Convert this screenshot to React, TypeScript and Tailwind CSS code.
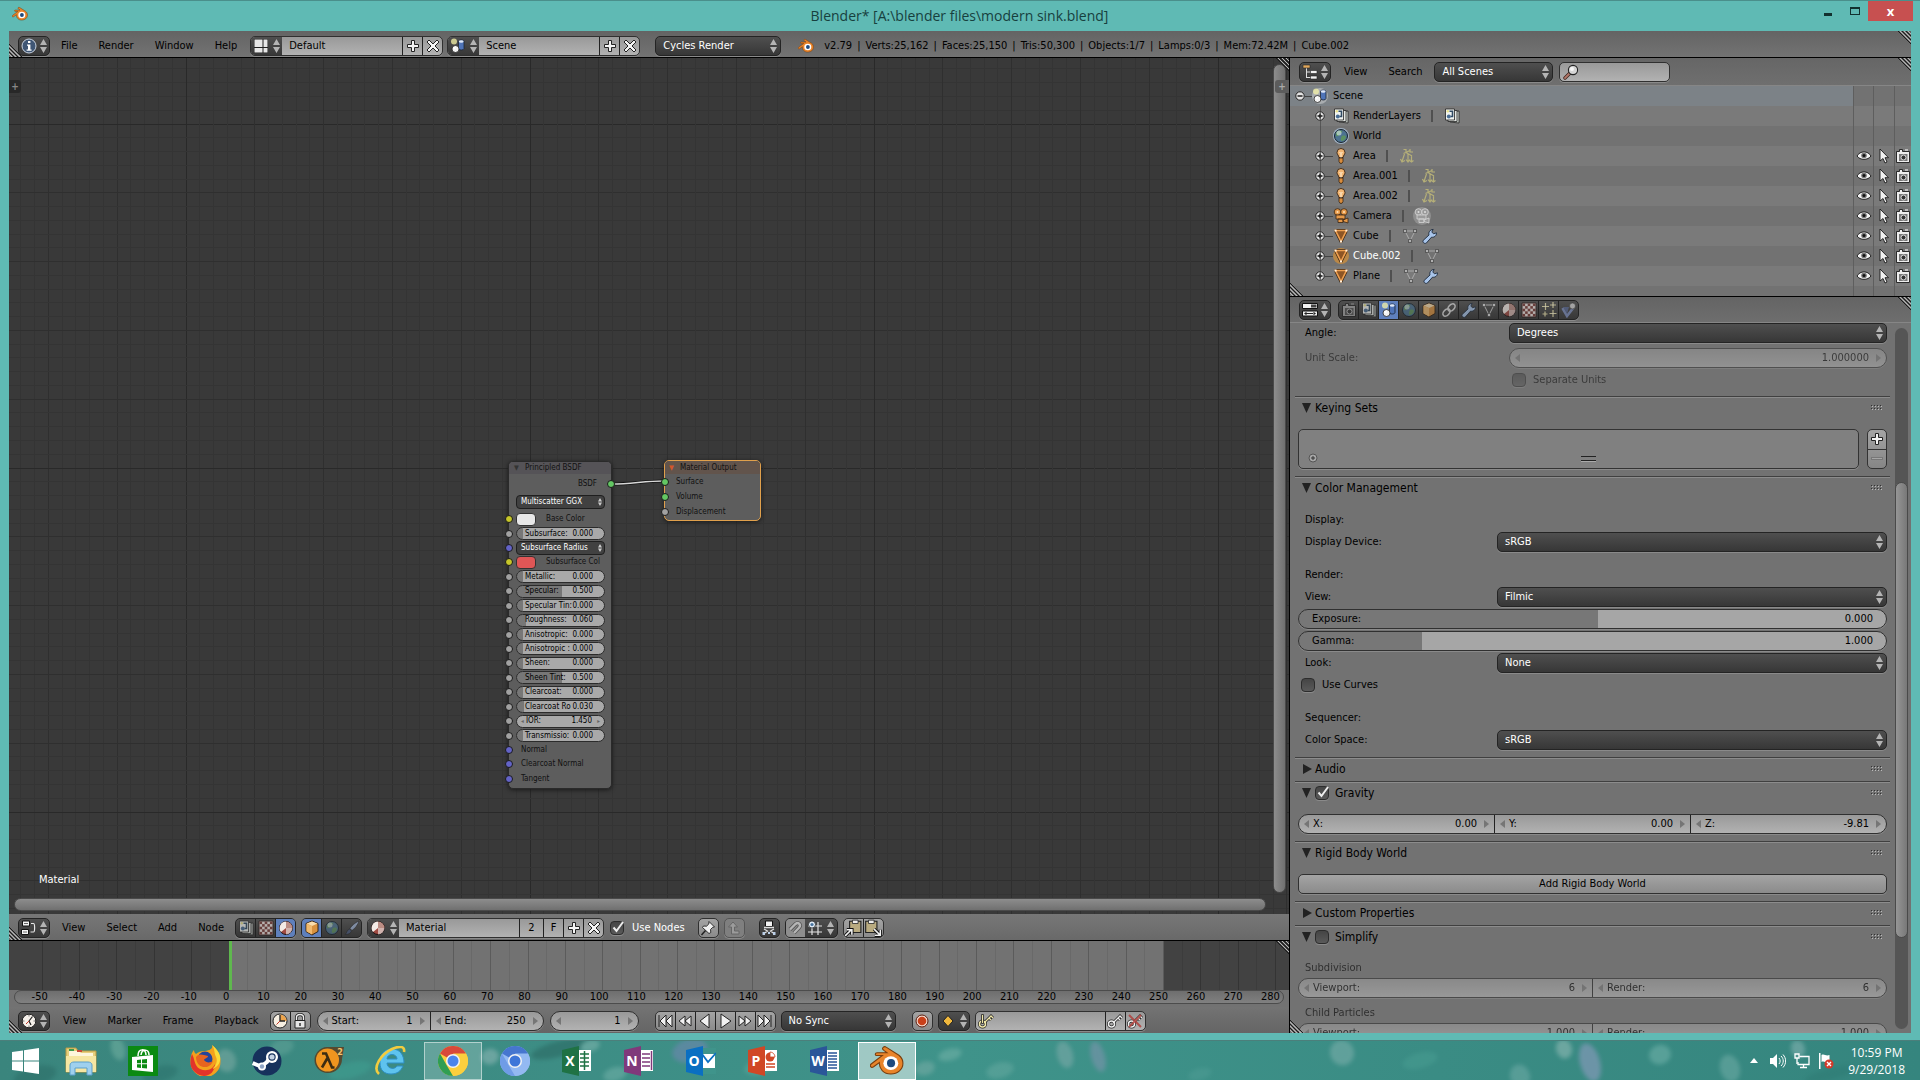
import type { ReactNode } from "react";

/* ---------- icons, all on a 16x16 grid ---------- */

const Svg = ({ children, size = 16 }: { children: ReactNode; size?: number }) => (
  <svg width={size} height={size} viewBox="0 0 16 16" className="shrink-0" aria-hidden="true">
    {children}
  </svg>
);

const PlusIcon = () => (
  <Svg>
    <path d="M6.5 2.5h3v4h4v3h-4v4h-3v-4h-4v-3h4z" fill="#f4f4f4" stroke="#222" />
  </Svg>
);

const CrossIcon = () => (
  <Svg>
    <path d="M4 2 8 6l4-4 2 2-4 4 4 4-2 2-4-4-4 4-2-2 4-4-4-4z" fill="#f4f4f4" stroke="#222" />
  </Svg>
);

const InfoIcon = () => (
  <Svg>
    <circle cx="8" cy="8" r="7" fill="#3f5675" stroke="#c9d3e0" />
    <path d="M7 3h2.4v2H7zM6 6.4h3.4v5h1.2v1.4H5.6v-1.4H7V7.8H6z" fill="#fff" />
  </Svg>
);

const LayoutIcon = () => (
  <Svg>
    <path d="M1 1h14v14H1z" fill="#222" />
    <path d="M1.5 1.5h8v7.500h-8zM10.500 1.500h4v7.500h-4zM10.500 10h4v4.500h-4zM1.500 10h8v4.500h-8z" fill="#e8e8e8" />
  </Svg>
);

const SceneIcon = () => (
  <Svg>
    <circle cx="4" cy="3.500" r="3" fill="#f6f3a8" opacity=".75" />
    <path d="M8.500 3.500c0-2 5.500-2 5.500 0v7c0 2-5.500 2-5.500 0z" fill="#4f74b8" stroke="#1b2333" strokeWidth=".8" />
    <ellipse cx="11.200" cy="3.500" rx="2.400" ry="1.200" fill="#dfe8f7" />
    <circle cx="5.500" cy="11" r="3.500" fill="#f2f2f2" stroke="#222" strokeWidth=".8" />
    <circle cx="4.500" cy="10" r="1.200" fill="#fff" />
  </Svg>
);

const LayersIcon = () => (
  <Svg>
    <path d="m6 4 9-1v12l-9-1z" fill="#cfd6cf" stroke="#222" strokeWidth=".8" />
    <path d="M4 2.500h9v11H4z" fill="#e4e8e4" stroke="#222" strokeWidth=".8" />
    <path d="M1.500 1h9v11h-9z" fill="#f1f4f1" stroke="#222" strokeWidth=".8" />
    <path d="M5.500 3.200h3v5.300h-2" fill="none" stroke="#2f4a63" strokeWidth="1.600" />
    <circle cx="4.800" cy="8.500" r="2" fill="#4a6d94" />
    <circle cx="3.800" cy="3.200" r="1.200" fill="#e9e28a" />
  </Svg>
);

const WorldIcon = () => (
  <Svg>
    <circle cx="8" cy="8" r="6.500" fill="#4d7391" stroke="#16232e" />
    <path d="M3 5c2-3 5-3 6-2s-1 2-2 3-2 3-4 2zM9 8c2-1 4 0 4 1s-2 4-4 4-1-4 0-5z" fill="#5c9160" />
    <circle cx="6" cy="5" r="2.500" fill="#dcebf2" opacity=".6" />
  </Svg>
);

const LampIcon = () => (
  <Svg>
    <path d="M8 .5a4 4 0 0 1 4 4c0 2-1.800 2.800-1.800 5H5.800C5.800 7.300 4 6.500 4 4.500a4 4 0 0 1 4-4z" fill="#f3b673" stroke="#3a2412" strokeWidth=".9" />
    <path d="M6 10h4v3.500l-1 1.800H7l-1-1.800z" fill="#d98d3d" stroke="#3a2412" strokeWidth=".8" />
    <path d="M6.500 4 8 5.500 9.500 4M8 5.500v4" stroke="#fff3dc" fill="none" />
  </Svg>
);

const LampDataIcon = () => (
  <Svg>
    <g fill="none" stroke="#b5af78" strokeWidth="1.200">
      <path d="M4.500 1.500H7v3M4.500 5.500 11 2.500M7 4.500 13 8M5.500 6 3 13.500M9 6v7M12.500 7.500v6.500M1.500 11l1.500 3 3-1.500M7 11.500 9 14l2-2.500M10.500 12.500l2 1.500 2-1.500M11 1v3h3" />
    </g>
  </Svg>
);

const CameraIcon = ({ grey = false }: { grey?: boolean }) => (
  <Svg>
    <g fill={grey ? "#9a9a9a" : "#e79a4a"} stroke={grey ? "#d5d5d5" : "#3a2412"} strokeWidth=".8">
      <circle cx="4.500" cy="4" r="3.300" />
      <circle cx="11" cy="4" r="3.300" />
      <path d="M3 7h9v4H3zM5 11h5v3.500H5zM10 12l5-2v5l-5-1.500z" />
    </g>
    <circle cx="4.500" cy="4" r="1" fill={grey ? "#ddd" : "#ffe0b8"} />
    <circle cx="11" cy="4" r="1" fill={grey ? "#ddd" : "#ffe0b8"} />
  </Svg>
);

const MeshIcon = () => (
  <Svg>
    <path d="M2.500 2.500h11L8 13.500z" fill="#8a4f1c" stroke="#3a2412" strokeWidth="3" strokeLinejoin="round" />
    <path d="M2.500 2.500h11L8 13.500z" fill="#8d5525" stroke="#f0a050" strokeWidth="1.600" />
    <path d="M1.500 1.500h2v2h-2zM12.500 1.500h2v2h-2zM7 12.500h2v2H7z" fill="#fff1de" />
  </Svg>
);

const MeshDataIcon = ({ tone = "#b0b0b0" }: { tone?: string }) => (
  <Svg>
    <path d="M3 3h10L8 13z" fill="none" stroke={tone} strokeWidth=".9" />
    <g fill={tone} stroke="#333" strokeWidth=".6">
      <path d="M1.500 1.500h3v3h-3zM11.500 1.500h3v3h-3zM6.500 11.500h3v3h-3z" />
    </g>
  </Svg>
);

const WrenchIcon = () => (
  <Svg>
    <path
      d="M1.200 12.400 7 7c-.8-2.500.8-5.400 4.200-5.600L9.800 4l1.700 1.800 3-1c.2 3-2.500 5-4.900 4.300l-5.300 6c-2 1-4.100-.9-3.100-2.700z"
      fill="#a9c5ea"
      stroke="#1d2b40"
      strokeWidth=".9"
    />
  </Svg>
);

const EyeIcon = () => (
  <Svg>
    <path d="M1 8c3-5.500 11-5.500 14 0-3 4.500-11 4.500-14 0z" fill="#f2f2f2" stroke="#222" />
    <circle cx="8" cy="7.500" r="2.800" fill="#777" />
    <circle cx="8" cy="7.500" r="1.500" fill="#111" />
  </Svg>
);

const PointerIcon = () => (
  <Svg>
    <path d="M4 1v12l3-2.500 2 4.500 2-1-2-4.300h3.500z" fill="#f2f2f2" stroke="#1a1a1a" strokeWidth=".9" />
  </Svg>
);

const PhotoIcon = ({ dim = false }: { dim?: boolean }) => (
  <Svg>
    <path d="M1.500 3.500h3v-2h3v2h7v11h-13z" fill={dim ? "#a5a5a5" : "#ededed"} stroke="#1a1a1a" strokeWidth=".9" />
    <path d="M4 6h8.500v7H4z" fill={dim ? "#555" : "#777"} />
    <circle cx="8.500" cy="9.500" r="2.500" fill="#333" stroke={dim ? "#bbb" : "#ddd"} />
    <path d="M10 2h3" stroke={dim ? "#aaa" : "#fff"} />
  </Svg>
);

const OutlinerIcon = () => (
  <Svg>
    <path d="M4.500 4v10M4.500 8H9M4.500 13.500H9" stroke="#ddd" fill="none" />
    <path d="M1 1h7v3H1z" fill="#e2a85c" stroke="#222" strokeWidth=".6" />
    <path d="M8.500 6.500H15v3H8.500zM8.500 12H15v3H8.500z" fill="#f0f0f0" stroke="#222" strokeWidth=".6" />
  </Svg>
);

const PropertiesIcon = () => (
  <Svg>
    <path d="M.5 1.500h15v5H.5z" fill="#f0f0f0" stroke="#111" />
    <path d="M9 2.500h5.500v3H9z" fill="#444" />
    <path d="M.5 9h15v5H.5z" fill="#f0f0f0" stroke="#111" />
    <path d="m2 11.500 2.500-1.800v3.600zM14 11.500l-2.500-1.800v3.600zM4 11h8v1H4z" fill="#222" />
  </Svg>
);

const NodeEditorIcon = () => (
  <Svg>
    <path d="M1.500 1h7v5h-7zM.5 9.500h7v5h-7z" fill="#f3f3f3" stroke="#111" />
    <path d="M3 3.500h4M2 12h4" stroke="#666" />
    <path d="M10 3.500h2.500c1.500 0 1.500 8.500 0 8.500H9.500" stroke="#e8e8e8" strokeWidth="1.200" fill="none" />
  </Svg>
);

const ClockIcon = () => (
  <Svg>
    <circle cx="8" cy="8" r="6.800" fill="#f5f0ea" stroke="#222" />
    <path d="M8 8 11.500 3.500M8 8l2 4" stroke="#222" strokeWidth="1.200" />
    <path d="M8 8 5 11" stroke="#c0392b" />
    <path d="M8 2v1.500M8 12.500V14M2 8h1.500M12.500 8H14" stroke="#777" />
  </Svg>
);

const ClockRangeIcon = () => (
  <Svg>
    <circle cx="8" cy="8" r="7" fill="#f7efe2" stroke="#222" />
    <path d="M8 8V1.500A6.500 6.500 0 0 1 14.500 8z" fill="#eda44c" />
    <path d="M8 2v6h5" stroke="#222" strokeWidth="1.300" fill="none" />
    <path d="M8 8 4.500 11.500" stroke="#c0392b" />
  </Svg>
);

const LockIcon = () => (
  <Svg>
    <path d="M4.500 8V4.500c0-4 7-4 7 0V8" fill="none" stroke="#222" strokeWidth="3" />
    <path d="M4.500 8V4.500c0-4 7-4 7 0V8" fill="none" stroke="#eee" strokeWidth="1.400" />
    <path d="M3 7.500h10v7.500H3z" fill="#e6e6e6" stroke="#222" />
    <path d="M8 10v3" stroke="#333" strokeWidth="1.500" />
  </Svg>
);

const CubeIcon = () => (
  <Svg>
    <path d="m8 1 6 2.500v8L8 15l-6-3.500v-8z" fill="#d7913f" stroke="#2b1a0a" strokeWidth=".9" />
    <path d="m8 1.500 5.500 2L8 6 2.500 3.500z" fill="#f7dcae" />
    <path d="M8 6v8.500l-5.500-3V3.800z" fill="#efb96f" />
  </Svg>
);

const LinkIcon = () => (
  <Svg>
    <g fill="none" stroke="#dcdcdc" strokeWidth="1.600">
      <ellipse cx="10.500" cy="5.500" rx="4.200" ry="2.800" transform="rotate(-45 10.500 5.500)" />
      <ellipse cx="5.500" cy="10.500" rx="4.200" ry="2.800" transform="rotate(-45 5.500 10.500)" />
    </g>
  </Svg>
);

const MaterialIcon = () => (
  <Svg>
    <circle cx="8" cy="8" r="6.500" fill="#a04a42" stroke="#1d1111" />
    <path d="M8 1.500A6.500 6.500 0 0 0 3 12l5-4z" fill="#f3ebe6" />
    <path d="M8 1.500A6.500 6.500 0 0 1 14.500 8L8 8z" fill="#bb8d84" />
    <path d="M8 8h6.500A6.500 6.500 0 0 1 8 14.500z" fill="#e6dedb" opacity=".7" />
  </Svg>
);

const checkerCells = [0, 1, 2, 3, 4].flatMap((r) =>
  [0, 1, 2, 3, 4].filter((c) => (r + c) % 2 === 0).map((c) => [c, r]),
);

const TextureIcon = () => (
  <Svg>
    <path d="M1 1h14v14H1z" fill="#f3e8e5" stroke="#2a1a18" />
    {checkerCells.map(([c, r]) => (
      <rect key={`${c}${r}`} x={1.5 + c * 2.6} y={1.5 + r * 2.6} width="2.600" height="2.600" fill="#7c3d38" />
    ))}
  </Svg>
);

const ParticlesIcon = () => (
  <Svg>
    <path
      d="M4.500 1v7M1 4.500h7M12 0v6M9 3h6M4 9.500v5M1.500 12h5M12 8v7M8.500 11.500h7"
      stroke="#f0e6b0"
      strokeWidth="1.200"
    />
    <path d="M4 4h1v1H4zM11.500 2.500h1v1h-1zM11.500 11h1v1h-1z" fill="#fff" />
  </Svg>
);

const PhysicsIcon = () => (
  <Svg>
    <path d="m1.500 6 4.500 8L13 5" fill="none" stroke="#7f90bf" strokeWidth="2.600" />
    <path d="M2 5h6l-2 7z" fill="#5a6994" />
    <circle cx="11.500" cy="4" r="3" fill="#d5d5d5" stroke="#333" strokeWidth=".6" />
  </Svg>
);

const BrushIcon = () => (
  <Svg>
    <path d="M15 1C11 2.500 7 6.500 6 8.500l2 2C10.500 9 14 5 15 1z" fill="#9fb2d4" stroke="#222" strokeWidth=".7" />
    <path d="M5.500 9 7.500 11c-1 2.500-3 3.500-6.500 3.500 2-1 1.500-4.500 4.500-5.500z" fill="#4a5a7d" stroke="#222" strokeWidth=".6" />
  </Svg>
);

const PinIcon = () => (
  <Svg>
    <path d="m9 1.500 5.500 5.500-1.800.3-2.200 2.200.3 3-1.800 1L2.500 7.500l1-1.500 3 .2 2.300-2.200z" fill="#f1f1f1" stroke="#222" strokeWidth=".9" />
    <path d="M5.500 10.500 1.500 15" stroke="#222" strokeWidth="1.500" />
  </Svg>
);

const UpIcon = () => (
  <Svg>
    <path d="M7 2 2.500 7H5.500v7H13v-3H8.500V7h3z" fill="#9b9b9b" stroke="#666" />
  </Svg>
);

const AutoRenderIcon = () => (
  <Svg>
    <path d="M4.500 1h7v5.500h-7z" fill="#f2f2f2" stroke="#111" />
    <path d="M3 7.500h10" stroke="#ddd" strokeWidth="1.500" />
    <path d="m3 9 3.500 2L3 13.500M13 9l-3.500 2 3.500 2.500" stroke="#ddd" strokeWidth="1.300" fill="none" />
    <path d="M1.500 12H4v3H1.500zM12 12h2.500v3H12zM7 12h2v2H7z" fill="#bcd0e8" />
  </Svg>
);

const MagnetIcon = () => (
  <Svg>
    <path d="M3 9.500 8.500 4c3-2.500 6 1 3.500 3.700L7 13" fill="none" stroke="#555" strokeWidth="4" />
    <path d="M3 9.500 8.500 4c3-2.500 6 1 3.500 3.700L7 13" fill="none" stroke="#b5b5b5" strokeWidth="2.400" />
  </Svg>
);

const SnapIcon = () => (
  <Svg>
    <path d="M5 2v13M11 2v13M1 6h14M1 12h14" stroke="#e3e3e3" strokeWidth="1.200" />
    <circle cx="5" cy="4.500" r="3.500" fill="#dfe9f3" stroke="#222" strokeWidth=".7" />
    <circle cx="5" cy="4.500" r="1.600" fill="#47739e" />
  </Svg>
);

const ClipboardIcon = ({ paste = false }: { paste?: boolean }) => (
  <Svg size={18}>
    <path d={paste ? "M1.500 2h10v10h-10z" : "M5 2h10v10H5z"} fill="#b9ab80" stroke="#222" />
    <path d={paste ? "M4 1h5v3H4z" : "M7.500 1h5v3h-5z"} fill="#eee" stroke="#222" strokeWidth=".7" />
    <path
      d={paste ? "m9 9 5 5M14.500 9.500v5h-5" : "m1 15 5.500-5.500M2.500 9.500H7V14"}
      stroke="#111"
      strokeWidth="3"
      fill="none"
    />
    <path
      d={paste ? "m9 9 5 5M14.500 9.500v5h-5" : "m1 15 5.500-5.500M2.500 9.500H7V14"}
      stroke="#f2f2f2"
      strokeWidth="1.400"
      fill="none"
    />
  </Svg>
);

const KeyIcon = ({ crossed = false, yellow = false }: { crossed?: boolean; yellow?: boolean }) => (
  <Svg>
    <path d="M6 10 13 3l2 2M11 5l2 2" stroke="#222" strokeWidth="2.800" fill="none" />
    <circle cx="4.500" cy="11" r="3" fill="none" stroke="#222" strokeWidth="3" />
    <path d="M6 10 13 3l2 2M11 5l2 2" stroke={yellow ? "#efe6a8" : "#eee"} strokeWidth="1.300" fill="none" />
    <circle cx="4.500" cy="11" r="3" fill="none" stroke={yellow ? "#efe6a8" : "#eee"} strokeWidth="1.500" />
    {yellow && <path d="M3.500 1.500h2v9h-2z" fill="#efe6a8" stroke="#222" strokeWidth=".8" />}
    {crossed && <path d="m2 2 12 12M14 2 2 14" stroke="#b0413c" strokeWidth="2" opacity=".85" />}
  </Svg>
);

const RecordIcon = () => (
  <Svg>
    <circle cx="8" cy="8" r="6" fill="#f3d8cd" stroke="#5a1c0c" />
    <circle cx="8" cy="8" r="4.300" fill="#c9401a" />
  </Svg>
);

const DiamondIcon = () => (
  <Svg>
    <path d="m8 2.500 5 5.500-5 5.500L3 8z" fill="#f0b83d" stroke="#222" />
  </Svg>
);

const SearchIcon = () => (
  <Svg>
    <path d="M7 9 2 14" stroke="#3d241d" strokeWidth="3.400" strokeLinecap="round" />
    <path d="M7 9 2 14" stroke="#b4786a" strokeWidth="1.800" strokeLinecap="round" />
    <circle cx="10" cy="6" r="4.600" fill="#d5d5d5" stroke="#222" strokeWidth="1.100" />
    <circle cx="9" cy="5" r="2" fill="#fff" opacity=".8" />
  </Svg>
);

const BlenderLogo = ({ size = 16 }: { size?: number }) => (
  <Svg size={size}>
    <path
      d="M6.200 1.600c-.7.600-.1 1 .5 1.500l1.300 1H3.300c-1 0-1.100 1.300-.1 1.300h2.600L.7 9.300c-1.200.9-.2 2.200 1 1.400l2.700-2c-.2 3 2 5.400 5.400 5.400 3.300 0 5.700-2.200 5.700-5 0-1.600-.8-2.900-1.900-3.800L7.600 1.500c-.5-.4-1-.3-1.400.1z"
      fill="#e8842a"
      stroke="#7a3d0b"
      strokeWidth=".5"
    />
    <ellipse cx="9.800" cy="9" rx="3.500" ry="3.200" fill="#fff" />
    <circle cx="9.900" cy="9" r="1.900" fill="#1d4a7e" />
  </Svg>
);

/* ---------- shared controls ---------- */

const UpDown = () => (
  <svg width="7" height="14" viewBox="0 0 7 14" className="pointer-events-none shrink-0" aria-hidden="true">
    <path d="M3.500 0 7 6H0zM3.500 14 0 8h7z" fill="#b4b4b4" />
  </svg>
);

const TinyArrow = ({ right = false }: { right?: boolean }) => (
  <svg width="5" height="8" viewBox="0 0 5 8" className="shrink-0" aria-hidden="true">
    <path d={right ? "M0 0v8l5-4z" : "M5 0v8L0 4z"} fill="#666" opacity=".75" />
  </svg>
);

const dark = "bg-linear-to-b from-[#4f4f4f] to-[#373737] border-[#242424] text-white";
const light = "bg-linear-to-b from-[#a4a4a4] to-[#8b8b8b] border-[#303030] text-black";
const field = "bg-linear-to-b from-[#999999] to-[#b2b2b2] border-[#303030] text-black";
const edge = "border shadow-[0_1px_0_#8a8a8a]";

const EditorButton = ({ icon, label }: { icon: ReactNode; label: string }) => (
  <button aria-label={label} className={`flex h-5 w-8 shrink-0 items-center justify-around rounded-[5px] ${edge} ${dark}`}>
    {icon}
    <UpDown />
  </button>
);

const Menus = ({ items }: { items: string[] }) => (
  <nav className="ml-px flex shrink-0 gap-px">
    {items.map((m) => (
      <button key={m} className="px-[10px]">
        {m}
      </button>
    ))}
  </nav>
);

const Dropdown = ({ value, label, className = "" }: { value: string; label: string; className?: string }) => (
  <div className={`relative flex h-5 items-center rounded-[5px] ${edge} ${dark} ${className}`}>
    <select aria-label={label} defaultValue={value} className="h-full w-full appearance-none pl-[7px] outline-none">
      <option>{value}</option>
    </select>
    <span className="pointer-events-none absolute right-[3px]">
      <UpDown />
    </span>
  </div>
);

const Checkbox = ({ id, checked = false }: { id: string; checked?: boolean }) => (
  <span className="relative flex h-[14px] w-[14px] shrink-0">
    <input
      id={id}
      type="checkbox"
      defaultChecked={checked}
      className="h-[14px] w-[14px] appearance-none rounded-[4px] border border-[#2c2c2c] bg-linear-to-b from-[#454545] to-[#5a5a5a] shadow-[0_1px_0_#8a8a8a]"
    />
    {checked && (
      <svg viewBox="0 0 14 14" className="pointer-events-none absolute inset-0" aria-hidden="true">
        <path d="m3.500 6.500 3 3.500L13 1" fill="none" stroke="#eee" strokeWidth="2" />
      </svg>
    )}
  </span>
);

// with an active entry the others are drawn dimmed
const IconGroup = ({ icons, active = -1, tone }: { icons: [string, ReactNode][]; active?: number; tone: string }) => (
  <div className={`flex h-5 shrink-0 overflow-hidden rounded-[5px] ${edge} ${tone}`}>
    {icons.map(([name, icon], i) => (
      <button
        key={name}
        aria-label={name}
        className={`flex w-5 items-center justify-center border-l border-[#222] first:w-[19px] first:border-l-0 ${i === active ? "bg-[#5f80bd]" : ""}`}
      >
        <span className={active >= 0 && i !== active ? "opacity-65" : ""}>{icon}</span>
      </button>
    ))}
  </div>
);

type NumProps = { label: string; value: string; className?: string };

// number field with arrows at either end
const Num = ({ label, value, className = "" }: NumProps) => (
  <label className={`flex h-full min-w-0 flex-1 items-center gap-1 px-[5px] ${className}`}>
    <TinyArrow />
    <span className="shrink-0">{label}</span>
    <input
      defaultValue={value}
      aria-label={label || "Value"}
      className="w-0 min-w-0 flex-1 bg-transparent pr-[3px] text-right outline-none"
    />
    <TinyArrow right />
  </label>
);

const NumRow = ({ fields, className = "" }: { fields: NumProps[]; className?: string }) => (
  <div className={`flex h-5 divide-x divide-[#222] overflow-hidden rounded-full ${edge} ${field} ${className}`}>
    {fields.map((f, i) => (
      <Num key={i} {...f} />
    ))}
  </div>
);

const Slider = ({ label, value, fill }: { label: string; value: string; fill: number }) => (
  <label
    className="flex h-5 items-center rounded-full border border-[#303030] bg-[#a6a6a6] px-[13px] shadow-[0_1px_0_#8a8a8a]"
    style={{ backgroundImage: `linear-gradient(to right, #777777 ${fill}%, transparent ${fill}%)` }}
  >
    {label}
    <input defaultValue={value} className="w-0 flex-1 bg-transparent text-right outline-none" />
  </label>
);

// diagonal grip in the corner of an area
const Corner = ({ side }: { side: "left" | "right" }) => (
  <svg
    width="13"
    height="13"
    viewBox="0 0 13 13"
    className={side === "left" ? "pointer-events-none absolute bottom-0 left-0" : "pointer-events-none absolute top-0 right-0"}
    aria-hidden="true"
  >
    <g transform={side === "right" ? "rotate(180 6.500 6.500)" : undefined}>
      <path d="M0 0 13 13M0 4l9 9M0 8l5 5" stroke="#1c1c1c" />
      <path d="M0 2l11 11M0 6l7 7M0 10l3 3" stroke="#b8b8b8" />
    </g>
  </svg>
);

const IdBlock = ({ icon, value, label, users }: { icon: ReactNode; value: string; label: string; users?: string }) => (
  <div className={`flex h-5 shrink-0 overflow-hidden rounded-[5px] ${edge} ${field}`}>
    <button aria-label={`Browse ${label}`} className={`flex w-[31px] items-center justify-around ${dark}`}>
      {icon}
      <UpDown />
    </button>
    <input aria-label={label} defaultValue={value} className="w-[120px] bg-transparent px-[7px] outline-none" />
    {users && (
      <>
        <button className="w-6 border-l border-[#222]">{users}</button>
        <button className="w-5 border-l border-[#222]">F</button>
      </>
    )}
    <button aria-label={`Add ${label}`} className="flex w-5 items-center justify-center border-l border-[#222]">
      <PlusIcon />
    </button>
    <button aria-label={`Remove ${label}`} className="flex w-5 items-center justify-center border-l border-[#222]">
      <CrossIcon />
    </button>
  </div>
);

/* ---------- top bars ---------- */

const TitleBar = () => (
  <header className="relative flex h-[31px] shrink-0 items-start border-t border-[#4a8f8b] pl-[12px]">
    <div className="mt-[5px]">
      <BlenderLogo />
    </div>
    <h1 className="flex-1 pt-[2px] pl-[77px] text-center font-['Open_Sans',sans-serif] text-[14px] leading-[26px] text-[#17403e]">
      Blender* [A:\blender files\modern sink.blend]
    </h1>
    <div className="flex pr-[7px]">
      <button aria-label="Minimize" className="flex h-[20px] w-[27px] items-center justify-center pt-[6px]">
        <span className="h-[3px] w-2 bg-[#12312f]" />
      </button>
      <button aria-label="Maximize" className="flex h-[20px] w-[27px] items-center justify-center">
        <span className="h-2 w-[10px] border border-t-2 border-[#12312f]" />
      </button>
      <button
        aria-label="Close"
        className="h-[20px] w-[45px] bg-[#c75050] font-['Open_Sans',sans-serif] text-[13px] leading-[18px] font-bold text-white"
      >
        x
      </button>
    </div>
  </header>
);

const stats = [
  "v2.79",
  "Verts:25,162",
  "Faces:25,150",
  "Tris:50,300",
  "Objects:1/7",
  "Lamps:0/3",
  "Mem:72.42M",
  "Cube.002",
];

const InfoBar = () => (
  <div className="relative flex h-[27px] shrink-0 items-center border-b border-black bg-linear-to-b from-[#646464] to-[#737373] pt-[3px] pl-[9px]">
    <EditorButton icon={<InfoIcon />} label="Editor type" />
    <Menus items={["File", "Render", "Window", "Help"]} />
    <div className="ml-[3px]">
      <IdBlock icon={<LayoutIcon />} value="Default" label="Screen" />
    </div>
    <div className="ml-[4px]">
      <IdBlock icon={<SceneIcon />} value="Scene" label="Scene name" />
    </div>
    <Dropdown value="Cycles Render" label="Engine" className="ml-[15px] w-[126px]" />
    <div className="ml-[17px]">
      <BlenderLogo />
    </div>
    <p className="ml-[10px] flex gap-[5px] whitespace-nowrap">
      {stats.map((s, i) => (
        <span key={s} className="flex gap-[5px]">
          {i > 0 && <span>|</span>}
          {s}
        </span>
      ))}
    </p>
    <Corner side="left" />
    <Corner side="right" />
  </div>
);

/* ---------- node editor ---------- */

const STEP = 13.76;
const gridLines = Array.from({ length: 150 }, (_, i) => i - 60);

const lineTone = (i: number) => (i % 25 === 0 ? "#292929" : i % 5 === 0 ? "#2f2f2f" : "#343434");

const Grid = () => (
  <svg className="absolute inset-0 h-full w-full" shapeRendering="crispEdges" aria-hidden="true">
    {gridLines.map((i) => (
      <g key={i} stroke={lineTone(i)}>
        <line x1={521 + i * STEP} x2={521 + i * STEP} y1="0" y2="100%" />
        <line x1="0" x2="100%" y1={410 + i * STEP} y2={410 + i * STEP} />
      </g>
    ))}
  </svg>
);

const socketTones = {
  grey: "bg-[#a1a1a1]",
  yellow: "bg-[#c7c729]",
  blue: "bg-[#6363c7]",
  green: "bg-[#63c763]",
};
type Tone = keyof typeof socketTones;

const Socket = ({ tone, right = false }: { tone: Tone; right?: boolean }) => (
  <span
    className={`absolute h-2 w-2 rounded-full border border-[#1a1a1a] ${socketTones[tone]} ${right ? "-right-[4px]" : "-left-[4px]"}`}
  />
);

type Input = { kind: "slider" | "color" | "menu" | "number" | "text"; name: string; tone: Tone; value?: string; fill?: number };

const inputs: Input[] = [
  { kind: "color", name: "Base Color", tone: "yellow", value: "bg-[#e7e7e7]" },
  { kind: "slider", name: "Subsurface:", tone: "grey", value: "0.000", fill: 7 },
  { kind: "menu", name: "Subsurface Radius", tone: "blue" },
  { kind: "color", name: "Subsurface Col", tone: "yellow", value: "bg-[#e05656]" },
  { kind: "slider", name: "Metallic:", tone: "grey", value: "0.000", fill: 7 },
  { kind: "slider", name: "Specular:", tone: "grey", value: "0.500", fill: 52 },
  { kind: "slider", name: "Specular Tin:", tone: "grey", value: "0.000", fill: 7 },
  { kind: "slider", name: "Roughness:", tone: "grey", value: "0.060", fill: 10 },
  { kind: "slider", name: "Anisotropic:", tone: "grey", value: "0.000", fill: 7 },
  { kind: "slider", name: "Anisotropic :", tone: "grey", value: "0.000", fill: 7 },
  { kind: "slider", name: "Sheen:", tone: "grey", value: "0.000", fill: 7 },
  { kind: "slider", name: "Sheen Tint:", tone: "grey", value: "0.500", fill: 52 },
  { kind: "slider", name: "Clearcoat:", tone: "grey", value: "0.000", fill: 7 },
  { kind: "slider", name: "Clearcoat Ro", tone: "grey", value: "0.030", fill: 8 },
  { kind: "number", name: "IOR:", tone: "grey", value: "1.450" },
  { kind: "slider", name: "Transmissio:", tone: "grey", value: "0.000", fill: 7 },
  { kind: "text", name: "Normal", tone: "blue" },
  { kind: "text", name: "Clearcoat Normal", tone: "blue" },
  { kind: "text", name: "Tangent", tone: "blue" },
];

const NodeInput = ({ input }: { input: Input }) => {
  const { kind, name, value, fill = 0 } = input;
  if (kind === "color")
    return (
      <label className="flex items-center">
        <button aria-label={name} className={`h-[13px] w-5 rounded-[4px] border border-[#333] ${value}`} />
        <span className="ml-[10px]">{name}</span>
      </label>
    );
  if (kind === "menu")
    return (
      <div className="relative flex h-[14px] items-center rounded-[4px] border border-[#1f1f1f] bg-[#414141] text-white">
        <select aria-label={name} className="h-3 w-full appearance-none pl-1 leading-3">
          <option>{name}</option>
        </select>
        <svg width="4" height="8" viewBox="0 0 7 14" className="pointer-events-none absolute right-[2px]" aria-hidden="true">
          <path d="M3.500 0 7 6H0zM3.500 14 0 8h7z" fill="#ccc" />
        </svg>
      </div>
    );
  if (kind === "text") return <span className="pl-[5px]">{name}</span>;
  return (
    <label
      className={`flex h-[13px] items-center rounded-full border border-[#2b2b2b] bg-[#a9a9a9] text-black ${kind === "number" ? "px-1" : "px-2"}`}
      style={{ backgroundImage: `linear-gradient(to right, #777777 ${fill}%, transparent ${fill}%)` }}
    >
      {kind === "number" && <span className="mr-[2px] w-[3px] text-[6px] text-[#666]">◂</span>}
      <span className="shrink-0">{name}</span>
      <input defaultValue={value} className="w-0 flex-1 bg-transparent pr-[3px] text-right outline-none" />
      {kind === "number" && <span className="w-[5px] text-right text-[6px] text-[#666]">▸</span>}
    </label>
  );
};

const NodeCanvas = () => (
  <div className="relative min-h-0 flex-1 overflow-hidden bg-[#393939] text-[8px] leading-3 text-[#111]">
    <Grid />

    <svg className="absolute inset-0 h-full w-full" aria-hidden="true">
      <path d="M603 426c20 0 32-3 52-3" fill="none" stroke="#111" strokeWidth="3" />
      <path d="M603 426c20 0 32-3 52-3" fill="none" stroke="#d8d8d8" strokeWidth="1.500" />
    </svg>

    <section className="absolute top-[403px] left-[499px] h-[328px] w-[104px] rounded-[5px] border border-[#2a2a2a] bg-[#5d5d5d] shadow-[0_1px_4px_#1a1a1a]">
      <h2 className="flex h-3 items-center rounded-t-[4px] bg-[#555357] pl-[5px]">
        <span className="w-[11px] text-[7px] text-[#333]">▼</span>
        Principled BSDF
      </h2>
      <div className="relative mt-[2px] flex h-4 items-center justify-end pr-[14px]">
        BSDF
        <Socket tone="green" right />
      </div>
      <div className="mt-[3px] mr-[6px] ml-[7px]">
        <NodeInput input={{ kind: "menu", name: "Multiscatter GGX", tone: "grey" }} />
      </div>
      <div className="mt-[3px] grid h-[274px] auto-rows-fr">
        {inputs.map((input) => (
          <div key={input.name} className="relative flex items-center pr-[6px] pl-[7px]">
            <Socket tone={input.tone} />
            <div className="min-w-0 flex-1 whitespace-nowrap">
              <NodeInput input={input} />
            </div>
          </div>
        ))}
      </div>
    </section>

    <section className="absolute top-[402px] left-[655px] w-[97px] rounded-[5px] border border-[#e0a04c] bg-[#5d5d5d] pb-px shadow-[0_1px_4px_#1a1a1a]">
      <h2 className="flex h-[13px] items-center rounded-t-[4px] bg-[#62544c] pl-[4px]">
        <span className="w-[11px] text-[7px] text-[#d4572a]">▼</span>
        Material Output
      </h2>
      {(
        [
          ["Surface", "green"],
          ["Volume", "green"],
          ["Displacement", "grey"],
        ] as [string, Tone][]
      ).map(([name, tone]) => (
        <div key={name} className="relative flex h-[15px] items-center pl-[11px]">
          <Socket tone={tone} />
          {name}
        </div>
      ))}
    </section>

    <p className="absolute bottom-[26px] left-[30px] text-[11px] leading-4 text-white">Material</p>

    <button aria-label="Show tool shelf" className="absolute top-[22px] left-0 h-[13px] w-3 rounded-r-[3px] bg-[#282828] text-[10px] font-bold text-[#888]">
      +
    </button>
    <div className="absolute top-[6px] right-[3px] bottom-[21px] w-[13px] rounded-full border border-[#4a4a4a] bg-linear-to-r from-[#8d8d8d] to-[#707070]" />
    <div className="absolute right-[23px] bottom-[3px] left-[5px] h-[13px] rounded-full border border-[#4a4a4a] bg-linear-to-b from-[#8d8d8d] to-[#707070]" />
    <button aria-label="Show properties" className="absolute top-[22px] right-0 h-[13px] w-[14px] rounded-l-[3px] bg-[#5c5c5c] text-[10px] font-bold text-[#aaa]">
      +
    </button>
    <Corner side="right" />
  </div>
);

const NodeHeader = () => (
  <div className="relative flex h-[27px] shrink-0 items-center border-b border-black bg-linear-to-b from-[#777777] to-[#696969] pt-[2px] pl-[9px]">
    <EditorButton icon={<NodeEditorIcon />} label="Editor type" />
    <div className="ml-[1px]">
      <Menus items={["View", "Select", "Add", "Node"]} />
    </div>
    <div className="ml-[1px] flex gap-[5px]">
      <IconGroup
        tone={dark}
        active={2}
        icons={[
          ["Compositing", <LayersIcon />],
          ["Texture", <TextureIcon />],
          ["Shader", <MaterialIcon />],
        ]}
      />
      <IconGroup
        tone={dark}
        active={0}
        icons={[
          ["Object", <CubeIcon />],
          ["World", <WorldIcon />],
          ["Line style", <BrushIcon />],
        ]}
      />
      <IdBlock icon={<MaterialIcon />} value="Material" label="Material name" users="2" />
    </div>
    <div className="ml-[6px] flex items-center gap-2 text-white">
      <Checkbox id="use-nodes" checked />
      <label htmlFor="use-nodes" className="whitespace-nowrap">
        Use Nodes
      </label>
    </div>
    <div className="ml-[13px] flex gap-[5px]">
      <IconGroup tone={light} icons={[["Pin", <PinIcon />]]} />
      <IconGroup tone="bg-[#7f7f7f] border-[#555]" icons={[["Parent", <UpIcon />]]} />
    </div>
    <div className="ml-[14px] flex gap-[5px]">
      <IconGroup tone={dark} icons={[["Auto render", <AutoRenderIcon />]]} />
      <div className={`flex h-5 overflow-hidden rounded-[5px] ${edge} ${dark}`}>
        <button aria-label="Snap" className="flex w-[19px] items-center justify-center bg-[#8e8e8e]">
          <MagnetIcon />
        </button>
        <button aria-label="Snap element" className="flex w-8 items-center justify-around">
          <SnapIcon />
          <UpDown />
        </button>
      </div>
      <IconGroup
        tone={light}
        icons={[
          ["Copy", <ClipboardIcon />],
          ["Paste", <ClipboardIcon paste />],
        ]}
      />
    </div>
    <Corner side="left" />
  </div>
);

/* ---------- timeline ---------- */

const frames = Array.from({ length: 34 }, (_, i) => (i - 5) * 10);

// frame number to percent of the area's width
const frameX = (f: number) => `${((220 + f * 3.738) / 1280) * 100}%`;

const Timeline = () => (
  <>
    <div className="relative h-[49px] shrink-0 overflow-hidden bg-[#727272]">
      <svg className="absolute inset-0 h-full w-full" shapeRendering="crispEdges" aria-hidden="true">
        <rect width={frameX(0)} height="100%" fill="#424242" />
        <rect x={frameX(250)} width="20%" height="100%" fill="#424242" />
        {frames.map((f) => (
          <g key={f}>
            <line x1={frameX(f)} x2={frameX(f)} y1="0" y2="100%" stroke="#000" strokeOpacity=".2" />
            <line x1={frameX(f + 5)} x2={frameX(f + 5)} y1="0" y2="100%" stroke="#000" strokeOpacity=".08" />
          </g>
        ))}
        <rect x={frameX(0)} width="3" height="100%" fill="#5fb84e" />
      </svg>
      <Corner side="right" />
    </div>
    <div className="h-[17px] shrink-0 bg-[#727272] px-[5px]">
      <div className="flex h-[14px] rounded-full border border-[#4c4c4c] bg-linear-to-b from-[#6e6e6e] to-[#808080] pl-[6px] text-[11px] leading-3">
        <div className="-mr-[6px] flex min-w-0 flex-1 items-center">
          {frames.map((f) => (
            <span key={f} className="flex w-0 flex-1 justify-center">
              {f}
            </span>
          ))}
        </div>
      </div>
    </div>
    <div className="relative flex h-[26px] shrink-0 items-center bg-linear-to-b from-[#737373] to-[#656565] pt-px pl-[9px]">
      <EditorButton icon={<ClockIcon />} label="Editor type" />
      <div className="ml-[2px]">
        <Menus items={["View", "Marker", "Frame", "Playback"]} />
      </div>
      <div className="ml-[1px]">
        <IconGroup
          tone={light}
          icons={[
            ["Preview range", <ClockRangeIcon />],
            ["Lock time", <LockIcon />],
          ]}
        />
      </div>
      <NumRow
        className="ml-[6px] w-[227px]"
        fields={[
          { label: "Start:", value: "1" },
          { label: "End:", value: "250" },
        ]}
      />
      <NumRow className="ml-[6px] w-[89px]" fields={[{ label: "", value: "1" }]} />
      <div className={`ml-[16px] flex h-5 overflow-hidden rounded-[5px] ${edge} ${light}`}>
        {(
          [
            ["First frame", "M2 2v12M9 2 3 8l6 6zM15 2 9 8l6 6z"],
            ["Previous keyframe", "M8 3 2 8l6 5zM14 3 8 8l6 5z"],
            ["Play reverse", "M12 1 3 8l9 7z"],
            ["Play", "m4 1 10 7-10 7z"],
            ["Next keyframe", "m2 3 6 5-6 5zM8 3l6 5-6 5z"],
            ["Last frame", "M14 2v12M1 2l6 6-6 6zM7 2l6 6-6 6z"],
          ] as const
        ).map(([name, d]) => (
          <button key={name} aria-label={name} className="flex w-5 items-center justify-center border-l border-[#222] first:w-[19px] first:border-l-0">
            <Svg>
              <path d={d} fill="#f2f2f2" stroke="#222" />
            </Svg>
          </button>
        ))}
      </div>
      <Dropdown value="No Sync" label="Sync" className="ml-[5px] w-[115px]" />
      <div className="ml-[16px]">
        <IconGroup tone={light} icons={[["Record", <RecordIcon />]]} />
      </div>
      <div className="ml-[5px]">
        <EditorButton icon={<DiamondIcon />} label="Keyframe type" />
      </div>
      <div className={`ml-[5px] flex h-5 overflow-hidden rounded-[5px] ${edge} ${field}`}>
        <span className="flex items-center pl-[2px]">
          <KeyIcon yellow />
        </span>
        <input aria-label="Keying set" className="w-[111px] bg-transparent outline-none" />
        <button aria-label="Insert key" className="flex w-5 items-center justify-center border-l border-[#222]">
          <KeyIcon />
        </button>
        <button aria-label="Delete key" className="flex w-5 items-center justify-center border-l border-[#222]">
          <KeyIcon crossed />
        </button>
      </div>
      <Corner side="left" />
    </div>
  </>
);

/* ---------- outliner ---------- */

type Row = { name: string; icon: ReactNode; extra?: ReactNode; expand?: boolean; toggles?: boolean; active?: boolean; halo?: string };

const MeshExtras = () => (
  <span className="flex gap-[4px]">
    <MeshDataIcon />
    <WrenchIcon />
  </span>
);

const rows: Row[] = [
  { name: "RenderLayers", icon: <LayersIcon />, extra: <LayersIcon />, expand: true },
  { name: "World", icon: <WorldIcon />, halo: "bg-[#9fb0c4]" },
  { name: "Area", icon: <LampIcon />, extra: <LampDataIcon />, expand: true, toggles: true },
  { name: "Area.001", icon: <LampIcon />, extra: <LampDataIcon />, expand: true, toggles: true },
  { name: "Area.002", icon: <LampIcon />, extra: <LampDataIcon />, expand: true, toggles: true },
  {
    name: "Camera",
    icon: <CameraIcon />,
    extra: (
      <span className="-ml-[2px] flex h-[18px] w-[18px] items-center justify-center rounded-full bg-[#8e8e8e]">
        <CameraIcon grey />
      </span>
    ),
    expand: true,
    toggles: true,
  },
  { name: "Cube", icon: <MeshIcon />, extra: <MeshExtras />, expand: true, toggles: true },
  { name: "Cube.002", icon: <MeshIcon />, extra: <MeshDataIcon />, expand: true, toggles: true, active: true, halo: "bg-[#b98848]" },
  { name: "Plane", icon: <MeshIcon />, extra: <MeshExtras />, expand: true, toggles: true },
];

const Expander = ({ open = false }: { open?: boolean }) => (
  <svg width="10" height="10" viewBox="0 0 10 10" className="relative shrink-0" aria-hidden="true">
    <circle cx="5" cy="5" r="4.200" fill="#e4e4e4" stroke="#222" />
    <path d={open ? "M2.500 5h5" : "M2.500 5h5M5 2.500v5"} stroke="#111" strokeWidth="1.400" />
  </svg>
);

const Toggles = ({ name, show = true }: { name: string; show?: boolean }) => (
  <div className="flex w-[58px] shrink-0">
    {(
      [
        ["Visible", "w-5", <EyeIcon />],
        ["Selectable", "w-[21px]", <PointerIcon />],
        ["Renderable", "w-[17px]", <PhotoIcon />],
      ] as [string, string, ReactNode][]
    ).map(([label, width, icon]) => (
      <span key={label} className={`flex items-center justify-center border-l border-[#5e5e5e] ${width}`}>
        {show && <button aria-label={`${label} ${name}`}>{icon}</button>}
      </span>
    ))}
  </div>
);

const Outliner = () => (
  <section className="relative flex h-[239px] shrink-0 flex-col border-b border-black bg-[#727272]">
    <div className="flex h-[28px] shrink-0 items-center border-b border-[#868686] bg-linear-to-b from-[#666666] to-[#6f6f6f] pl-[9px]">
      <EditorButton icon={<OutlinerIcon />} label="Editor type" />
      <div className="ml-[2px]">
        <Menus items={["View", "Search"]} />
      </div>
      <Dropdown value="All Scenes" label="Display mode" className="ml-[2px] w-[119px]" />
      <label className={`ml-[6px] flex h-5 items-center rounded-[5px] pl-[3px] ${edge} ${field}`}>
        <SearchIcon />
        <input aria-label="Search" type="text" className="w-[90px] bg-transparent outline-none" />
      </label>
    </div>
    <div className="flex h-5 shrink-0">
      <div className="flex flex-1 items-center bg-[#7c8287] pl-[5px]">
        <Expander open />
        <span className="h-px w-[7px] bg-[#444]" />
        <span className="rounded-full bg-[#a9adb0]">
          <SceneIcon />
        </span>
        <span className="ml-[5px]">Scene</span>
      </div>
      <Toggles name="Scene" show={false} />
    </div>
    {rows.map((row) => (
      <div key={row.name} className="flex h-5 shrink-0 odd:bg-[#7a7a7a] even:bg-[#727272]">
        <div className="flex flex-1 items-center pl-[25px]">
          {row.expand ? <Expander /> : <span className="w-[10px]" />}
          <span className={row.expand && row.toggles ? "h-px w-[8px] bg-[#444]" : "w-[8px]"} />
          <span className={`rounded-full ${row.halo ?? ""}`}>{row.icon}</span>
          <span className={`ml-[4px] ${row.active ? "text-white" : ""}`}>{row.name}</span>
          {row.extra && (
            <>
              <span className="ml-[10px] h-3 w-[2px] bg-[#505050]" />
              <span className="ml-[11px]">{row.extra}</span>
            </>
          )}
        </div>
        <Toggles name={row.name} show={!!row.toggles} />
      </div>
    ))}
    <div className="flex flex-1 justify-end">
      <Toggles name="none" show={false} />
    </div>
    {/* tree line */}
    <span className="absolute top-[48px] left-[30px] h-[174px] w-px bg-[#333] opacity-50" />
    <Corner side="right" />
    <Corner side="left" />
  </section>
);

/* ---------- properties ---------- */

const tabs: [string, ReactNode][] = [
  ["Render", <PhotoIcon dim />],
  ["Render layers", <LayersIcon />],
  ["Scene", <SceneIcon />],
  ["World", <WorldIcon />],
  ["Object", <CubeIcon />],
  ["Constraints", <LinkIcon />],
  ["Modifiers", <WrenchIcon />],
  ["Data", <MeshDataIcon tone="#e0e0e0" />],
  ["Material", <MaterialIcon />],
  ["Texture", <TextureIcon />],
  ["Particles", <ParticlesIcon />],
  ["Physics", <PhysicsIcon />],
];

const PanelArrow = ({ open }: { open: boolean }) => (
  <svg width="10" height="10" viewBox="0 0 10 10" className="shrink-0" aria-hidden="true">
    <path d={open ? "M0 0h9L4.500 10z" : "M1 0v10l9-5z"} fill="#222" />
  </svg>
);

const Grip = () => (
  <svg width="12" height="6" viewBox="0 0 12 6" className="ml-auto" shapeRendering="crispEdges" aria-hidden="true">
    {[0, 3, 6, 9].map((x) => (
      <g key={x}>
        <path d={`M${x} 0h1v1h-1zM${x} 3h1v1h-1z`} fill="#333" />
        <path d={`M${x + 1} 1h1v1h-1zM${x + 1} 4h1v1h-1z`} fill="#bbb" />
      </g>
    ))}
  </svg>
);

type PanelProps = { title: string; open?: boolean; check?: "on" | "off"; children?: ReactNode };

const Panel = ({ title, open = true, check, children }: PanelProps) => (
  <section className="shrink-0 border-t border-[#404040] px-[3px]">
    <div className="-mx-[3px] flex h-[23px] items-center gap-[3px] border-t border-[#8c8c8c] px-[7px] pb-[2px] text-[12px]">
      <button aria-label={`Toggle ${title}`}>
        <PanelArrow open={open} />
      </button>
      {check ? (
        <>
          <Checkbox id={title} checked={check === "on"} />
          <label htmlFor={title} className="ml-[3px]">
            {title}
          </label>
        </>
      ) : (
        <h3>{title}</h3>
      )}
      <Grip />
    </div>
    {open && <div className="flex flex-col gap-[2px] pt-[9px] pb-[7px]">{children}</div>}
  </section>
);

const Caption = ({ children, className = "" }: { children: ReactNode; className?: string }) => (
  <p className={`h-5 pl-[7px] leading-5 ${className}`}>{children}</p>
);

const SelectRow = ({ label, value }: { label: string; value: string }) => (
  <div className="grid grid-cols-[199fr_390fr] items-center">
    <span className="pl-[7px]">{label}</span>
    <Dropdown value={value} label={label} />
  </div>
);

const Properties = () => (
  <section className="relative flex min-h-0 flex-1 flex-col bg-[#727272]">
    <div className="flex h-[26px] shrink-0 items-center border-b border-[#868686] bg-linear-to-b from-[#646464] to-[#6e6e6e] pl-[9px]">
      <EditorButton icon={<PropertiesIcon />} label="Editor type" />
      <div className="ml-[7px]">
        <IconGroup tone={dark} active={2} icons={tabs} />
      </div>
    </div>

    <div className="flex min-h-0 flex-1">
      <div className="flex min-w-0 flex-1 flex-col overflow-hidden pl-[5px]">
        <div className="flex h-[73px] shrink-0 flex-col px-[3px]">
          <div className="grid grid-cols-[211fr_378fr] items-center">
            <span className="pl-[7px]">Angle:</span>
            <Dropdown value="Degrees" label="Angle" />
          </div>
          <div className="mt-[5px] grid grid-cols-[211fr_378fr] items-center opacity-50">
            <span className="pl-[7px]">Unit Scale:</span>
            <NumRow fields={[{ label: "", value: "1.000000" }]} />
          </div>
          <div className="mt-[2px] grid h-5 grid-cols-[211fr_378fr] items-center opacity-50">
            <span />
            <div className="flex items-center gap-[7px] pl-[3px]">
              <Checkbox id="separate-units" />
              <label htmlFor="separate-units">Separate Units</label>
            </div>
          </div>
        </div>

        <Panel title="Keying Sets">
          <div className="flex gap-2">
            <div className="flex h-10 flex-1 items-end rounded-[5px] border border-[#333] bg-[#808080] pb-[5px] pl-[9px] shadow-[0_1px_0_#8a8a8a]">
              <svg width="10" height="10" viewBox="0 0 10 10" aria-hidden="true">
                <circle cx="5" cy="5" r="4" fill="#a6a6a6" stroke="#555" />
                <path d="M3 5h4M5 3v4" stroke="#333" />
              </svg>
              <span className="mx-auto mb-[2px] h-[5px] w-[15px] border-y border-[#222] shadow-[0_1px_0_#aaa]" />
            </div>
            <div className="flex h-10 w-5 flex-col overflow-hidden rounded-[5px] border border-[#333] bg-linear-to-b from-[#a4a4a4] to-[#868686]">
              <button aria-label="Add keying set" className="flex flex-1 items-center justify-center border-b border-[#333]">
                <PlusIcon />
              </button>
              <button aria-label="Remove keying set" className="flex flex-1 items-center justify-center">
                <span className="h-[3px] w-3 border border-[#777] bg-[#a6a6a6]" />
              </button>
            </div>
          </div>
        </Panel>

        <Panel title="Color Management">
          <Caption className="mt-px">Display:</Caption>
          <SelectRow label="Display Device:" value="sRGB" />
          <Caption className="mt-[11px]">Render:</Caption>
          <SelectRow label="View:" value="Filmic" />
          <Slider label="Exposure:" value="0.000" fill={51} />
          <Slider label="Gamma:" value="1.000" fill={21} />
          <SelectRow label="Look:" value="None" />
          <div className="flex h-5 items-center gap-[7px] pl-[3px]">
            <Checkbox id="use-curves" />
            <label htmlFor="use-curves">Use Curves</label>
          </div>
          <Caption className="mt-[11px]">Sequencer:</Caption>
          <SelectRow label="Color Space:" value="sRGB" />
        </Panel>

        <Panel title="Audio" open={false} />

        <Panel title="Gravity" check="on">
          <NumRow
            fields={[
              { label: "X:", value: "0.00" },
              { label: "Y:", value: "0.00" },
              { label: "Z:", value: "-9.81" },
            ]}
          />
        </Panel>

        <Panel title="Rigid Body World">
          <button className={`h-5 rounded-[5px] ${edge} ${light}`}>Add Rigid Body World</button>
        </Panel>

        <Panel title="Custom Properties" open={false} />

        <Panel title="Simplify" check="off">
          <div className="opacity-60">
            <Caption>Subdivision</Caption>
            <NumRow
              fields={[
                { label: "Viewport:", value: "6" },
                { label: "Render:", value: "6" },
              ]}
            />
            <Caption className="mt-[5px]">Child Particles</Caption>
            <NumRow
              fields={[
                { label: "Viewport:", value: "1.000" },
                { label: "Render:", value: "1.000" },
              ]}
            />
          </div>
        </Panel>
      </div>

      {/* scrollbar */}
      <div className="flex w-[21px] shrink-0 justify-center pt-[5px] pr-[3px] pb-[4px] pl-[5px]">
        <div className="flex w-[13px] flex-col rounded-full bg-[#555]">
          <div className="h-[22%]" />
          <div className="h-[65%] rounded-full border border-[#4a4a4a] bg-linear-to-r from-[#969696] to-[#787878]" />
        </div>
      </div>
    </div>
    <Corner side="right" />
    <Corner side="left" />
  </section>
);

/* ---------- taskbar ---------- */

const Office = ({ letter, back, page }: { letter: string; back: string; page: ReactNode }) => (
  <svg width="30" height="30" viewBox="0 0 30 30" aria-hidden="true">
    <path d="M16 4h13v21H16z" fill="#fff" />
    {page}
    <path d="M0 4 17 0v30L0 26z" fill={back} />
    <text x="8" y="20" textAnchor="middle" fontSize="14" fontWeight="700" fill="#fff" className="font-['Open_Sans',sans-serif]">
      {letter}
    </text>
  </svg>
);

const Chrome = ({ tones }: { tones: [string, string, string, string] }) => (
  <svg width="30" height="30" viewBox="0 0 30 30" aria-hidden="true">
    <circle cx="15" cy="15" r="15" fill={tones[2]} />
    <path d="M15 15 2 7.500a15 15 0 0 1 26 0z" fill={tones[0]} />
    <path d="M2 7.500 8.500 19 15 30A15 15 0 0 1 2 7.500z" fill={tones[1]} />
    <path d="M28 7.500H15L21.500 19 15 30A15 15 0 0 0 28 7.500z" fill={tones[2]} />
    <circle cx="15" cy="15" r="7" fill="#f3f3f3" />
    <circle cx="15" cy="15" r="5.500" fill={tones[3]} />
  </svg>
);

const apps: [string, ReactNode][] = [
  [
    "File Explorer",
    <svg width="34" height="30" viewBox="0 0 34 30" aria-hidden="true">
      <path d="M2 2h10l2 3h18v21H2z" fill="#e7cf7c" stroke="#b99a43" />
      <path d="M5 5h10l2 2h12v5H5z" fill="#fdf6dc" />
      <path d="M5 3h5v2H5z" fill="#3c9a4c" />
      <path d="M13 4h5v2h-5z" fill="#c94a3b" />
      <path d="M2 10h30v16H2z" fill="#f6e6a2" />
      <path d="M6 29V19c0-2 2-3 4-3h14c2 0 4 1 4 3v10h-5v-7H11v7z" fill="#9fd0ee" stroke="#5b9fcb" />
    </svg>,
  ],
  [
    "Store",
    <svg width="30" height="30" viewBox="0 0 30 30" aria-hidden="true">
      <path d="M0 0h30v30H0z" fill="#0b8a12" />
      <path d="M10 10c0-8 8-8 8-1M13 9c1-7 8-6 8 0" fill="none" stroke="#fff" strokeWidth="1.500" />
      <path d="m4 11 21-2v17L4 24z" fill="#fff" />
      <path d="m9 14 4-.4v3.600H9zM14 13.500l5-.5v4.200h-5zM9 18.200h4V22l-4-.5zM14 18.200h5v4.400l-5-.5z" fill="#0b8a12" />
    </svg>,
  ],
  [
    "Firefox",
    <svg width="31" height="31" viewBox="0 0 31 31" aria-hidden="true">
      <path d="M15 6c6-1 8-3 7-6 5 4 9 10 8.500 17A15 15 0 0 1 .5 17C0 12 2 7 4 5c0 2 1 3 2 4 2-2 5-3 9-3z" fill="#f4a11d" />
      <path d="M2 9c3 5 2 12 8 15 7 3 13 0 15-5 0 7-5 12-11 12C6 30 0 24 .5 17 .5 14 1 11 2 9z" fill="#e2342b" />
      <circle cx="15" cy="14" r="7.500" fill="#25449a" />
      <path d="M6 12c2-3 5-3 8-2l4 1c0 2-3 2-4 4 2 3 6 3 9 1-2 6-9 8-14 4-2-2-3-5-3-8z" fill="#e8641f" />
      <path d="M22 0c3 4 2 8 4 12s0 9-4 12c7-2 9-8 8-13-1-4-4-8-8-11z" fill="#fbdb38" />
    </svg>,
  ],
  [
    "Steam",
    <svg width="30" height="30" viewBox="0 0 30 30" aria-hidden="true">
      <circle cx="15" cy="15" r="14.500" fill="#16315c" />
      <path d="M.7 17 9 20.500l6-4.500 5-9" stroke="#fff" strokeWidth="4" fill="none" />
      <circle cx="20" cy="11" r="6" fill="#fff" />
      <circle cx="20" cy="11" r="3.700" fill="#16315c" />
      <circle cx="20" cy="11" r="2.600" fill="#c6d2e4" />
      <circle cx="10" cy="20.500" r="4" fill="#fff" />
      <circle cx="10" cy="20.500" r="2.200" fill="#8fa5c6" />
    </svg>,
  ],
  [
    "Half-Life 2",
    <svg width="31" height="30" viewBox="0 0 31 30" aria-hidden="true">
      <path d="M13 1h17l-2 12a14 14 0 0 1-14 14A13 13 0 1 1 13 1z" fill="#55492f" />
      <circle cx="13.500" cy="14" r="11.500" fill="#f0951f" />
      <path d="M8 7.500h4l6 14h2.500M13.500 12 8 21.500" stroke="#3c2c12" strokeWidth="2.600" fill="none" />
      <text x="26" y="9" textAnchor="middle" fontSize="9" fontWeight="700" fill="#f6c36c">
        2
      </text>
    </svg>,
  ],
  [
    "Internet Explorer",
    <svg width="32" height="30" viewBox="0 0 32 30" aria-hidden="true">
      <path
        d="M5 17C4 8 10 3 17 3c8 0 12 6 12 14H12c0 6 8 7 10 3h6c-2 5-6 8-12 8C9 28 5 24 5 17zm7-4h10c0-6-10-6-10 0z"
        fill="#5ec3ee"
        stroke="#2e8fc4"
      />
      <path d="M4 28C-3 22 6 8 17 3c9-4 13-2 12 3" fill="none" stroke="#f2cc3f" strokeWidth="2.600" />
    </svg>,
  ],
  ["Chrome", <Chrome tones={["#d9493a", "#2f9e53", "#fbcf3e", "#4b84ec"]} />],
  ["Chromium", <Chrome tones={["#4676cf", "#6f9ce6", "#93b9f2", "#3f76d8"]} />],
  ["Excel", <Office letter="X" back="#1f7244" page={<path d="M18 8h9M18 12h9M18 16h9M18 20h9M22.500 5v19" stroke="#1f7244" strokeWidth="1.500" />} />],
  ["OneNote", <Office letter="N" back="#80397b" page={<path d="M18 8h8M18 12h8M18 16h8M18 20h8M27.500 5v19" stroke="#80397b" strokeWidth="1.500" />} />],
  [
    "Outlook",
    <Office
      letter="O"
      back="#0a6fc2"
      page={
        <>
          <path d="M16 2h14v6H16zM16 22h14v6H16z" fill="#3f948b" />
          <path d="m16 8 6 8 8-9" stroke="#0a6fc2" strokeWidth="1.800" fill="none" />
        </>
      }
    />,
  ],
  [
    "PowerPoint",
    <Office
      letter="P"
      back="#d04725"
      page={
        <>
          <circle cx="22" cy="11" r="4.500" fill="#d04725" />
          <path d="M22 11V6a5 5 0 0 1 5 5z" fill="#fff" stroke="#d04725" strokeWidth=".8" />
          <path d="M18 18h9M18 21h9" stroke="#d04725" strokeWidth="1.500" />
        </>
      }
    />,
  ],
  ["Word", <Office letter="W" back="#2a5699" page={<path d="M18 7h9M18 10h9M18 13h9M18 16h9M18 19h9M18 22h9" stroke="#2a5699" strokeWidth="1.300" />} />],
  ["Blender", <BlenderLogo size={34} />],
];

const appFrame = (name: string) => {
  if (name === "Chrome") return "border border-white/50 bg-white/20";
  if (name === "Blender") return "border border-white bg-white/50";
  return "";
};

const petals: [number, number, number, number, string][] = [
  [35, 36, 22, 10, "#2d6f69"],
  [118, 8, 7, 12, "#6fae9f"],
  [160, 34, 18, 8, "#2c736d"],
  [226, 20, 10, 12, "#79a9a2"],
  [282, 6, 12, 8, "#5fa197"],
  [350, 30, 22, 8, "#3f9e90"],
  [490, 16, 9, 8, "#8bb5b3"],
  [560, 8, 30, 8, "#2b6963"],
  [590, 5, 10, 6, "#7cb3ac"],
  [615, 34, 12, 7, "#6eaea6"],
  [690, 10, 18, 12, "#6f86b0"],
  [760, 26, 16, 8, "#5aa79a"],
  [925, 28, 10, 7, "#74aba4"],
  [950, 14, 12, 6, "#6fb0a6"],
  [1000, 30, 14, 8, "#62a79e"],
  [1065, 14, 8, 14, "#7ba9a8"],
  [1098, 16, 7, 16, "#7d94ad"],
  [1200, 34, 12, 6, "#4d9b93"],
  [1342, 12, 12, 13, "#7aaeaa"],
  [1420, 20, 18, 8, "#479b90"],
  [1520, 36, 10, 12, "#6ba9a4"],
  [1564, 8, 8, 10, "#8fb9b4"],
  [1590, 22, 10, 20, "#8f9cc0"],
  [1660, 14, 11, 10, "#6eb0a8"],
  [1730, 28, 10, 14, "#6caaa4"],
  [1798, 8, 7, 9, "#84b2b1"],
  [1830, 34, 26, 6, "#2f7c75"],
];

const Taskbar = () => (
  <footer className="relative h-10 shrink-0 overflow-hidden border-t border-[#4b7f7b] bg-linear-to-r from-[#3a857d] via-[#3f938a] to-[#35857e]">
    <svg className="absolute inset-0 h-full w-full" viewBox="0 0 1920 40" preserveAspectRatio="none" aria-hidden="true">
      <g className="blur-[2px]" opacity=".6">
        {petals.map(([cx, cy, rx, ry, tone]) => (
          <ellipse key={cx} cx={cx} cy={cy} rx={rx} ry={ry} fill={tone} transform={`rotate(-15 ${cx} ${cy})`} />
        ))}
      </g>
    </svg>
    <div className="relative flex h-full items-center">
      <button aria-label="Start" className="flex w-[50px] justify-center">
        <svg width="27" height="26" viewBox="0 0 27 26" aria-hidden="true">
          <path d="m0 4 11-1.600V12.500H0zM12 2.200 27 0v12.500H12zM0 13.500h11v10L0 22zM12 13.500h15V26l-15-2.200z" fill="#fff" />
        </svg>
      </button>
      {apps.map(([name, icon]) => (
        <button key={name} aria-label={name} className={`mx-[2px] flex h-[38px] w-[58px] items-center justify-center ${appFrame(name)}`}>
          {icon}
        </button>
      ))}
      <div className="ml-auto flex items-center gap-2 pr-[15px]">
        <svg width="8" height="5" viewBox="0 0 8 5" className="mr-1" aria-hidden="true">
          <path d="M4 0 8 5H0z" fill="#fff" />
        </svg>
        <svg width="16" height="16" viewBox="0 0 16 16" aria-hidden="true">
          <path d="M0 5h3l4-4v14l-4-4H0z" fill="#fff" />
          <path d="M9 5c1.500 2 1.500 4 0 6M11 3c3 3 3 7 0 10M13 1.500c3.500 4 3.500 9 0 13" fill="none" stroke="#fff" />
        </svg>
        <svg width="16" height="16" viewBox="0 0 16 16" aria-hidden="true">
          <path d="M5.500 3.500h9.500v8H4V9M9.500 11.500V14M6 14.500h7" fill="none" stroke="#fff" strokeWidth="1.300" />
          <path d="M1 1h4v4H1zM3 5v6" fill="none" stroke="#fff" strokeWidth="1.300" />
        </svg>
        <svg width="16" height="16" viewBox="0 0 16 16" aria-hidden="true">
          <path d="M1 0h1.500v16H1zM3.500 2c3-1.500 4 1.500 8 0v7c-4 1.500-5-1.500-8 0z" fill="#fff" />
          <circle cx="11" cy="11" r="4.500" fill="#d43a2a" />
          <path d="m9 9 4 4M13 9l-4 4" stroke="#fff" strokeWidth="1.400" />
        </svg>
        <div className="ml-[6px] text-center font-['Open_Sans',sans-serif] text-[12px] leading-[17px] text-white">
          <p>10:59 PM</p>
          <p>9/29/2018</p>
        </div>
      </div>
    </div>
  </footer>
);

const App = () => (
  <div className="flex h-screen flex-col overflow-hidden bg-[#5fbab4] font-['DejaVu_Sans_Condensed','DejaVu_Sans',sans-serif] text-[11px] leading-4 text-black">
    <TitleBar />
    <main className="mx-[9px] mb-[7px] flex min-h-0 flex-1 flex-col">
      <InfoBar />
      <div className="grid min-h-0 flex-1 grid-cols-[1281fr_621fr]">
        <div className="flex min-h-0 min-w-0 flex-col border-r border-black">
          <NodeCanvas />
          <NodeHeader />
          <Timeline />
        </div>
        <div className="flex min-h-0 min-w-0 flex-col">
          <Outliner />
          <Properties />
        </div>
      </div>
    </main>
    <Taskbar />
  </div>
);

export default App;
